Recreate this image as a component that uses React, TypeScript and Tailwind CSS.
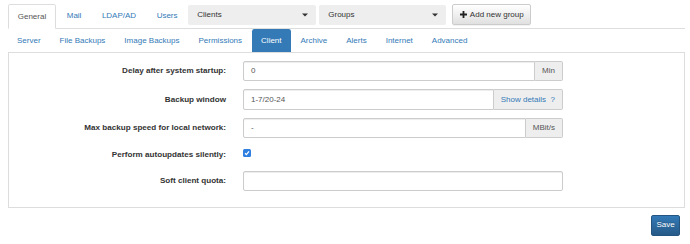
import React from "react";

const topTabs = ["Mail", "LDAP/AD", "Users"];
const subTabs = ["Server", "File Backups", "Image Backups", "Permissions", "Client", "Archive", "Alerts", "Internet", "Advanced"];

function Caret() {
    return (
        <svg width="6" height="4" viewBox="0 0 6 4" className="shrink-0">
            <path d="M0 0.5 L6 0.5 L3 3.5 Z" fill="#333" />
        </svg>
    );
}

function Select({ label, width }: { label: string; width: string }) {
    return (
        <div className={`${width} h-[20px] bg-[#eee] rounded-[2px] flex items-center justify-between pl-[9px] pr-[8px] text-[#333]`}>
            <span>{label}</span>
            <Caret />
        </div>
    );
}

function Row({ label, children, tall = true }: { label: string; children: React.ReactNode; tall?: boolean }) {
    return (
        <div className={`flex items-center ${tall ? "h-[20.4px]" : "h-[16.2px]"} mb-[8.1px]`}>
            <div className="w-[217px] text-right font-bold text-[8.1px] text-[#333]">{label}</div>
            <div className="ml-[17px] w-[320px] flex">{children}</div>
        </div>
    );
}

function Input({ value, addon }: { value?: string; addon?: React.ReactNode }) {
    return (
        <div className="flex w-full h-[20.4px]">
            <div
                className={`flex-1 flex items-center px-[7px] border border-[#ccc] bg-white text-[#555] shadow-[inset_0_1px_1px_rgba(0,0,0,0.075)] ${addon ? "rounded-l-[2px]" : "rounded-[2px]"}`}
            >
                {value}
            </div>
            {addon && (
                <div className="flex items-center px-[7px] border border-l-0 border-[#ccc] bg-[#eee] rounded-r-[2px] text-[#555]">
                    {addon}
                </div>
            )}
        </div>
    );
}

export default function App() {
    return (
        <div className="w-[690px] h-[244px] bg-white pl-[8px] pt-[4px] font-['Liberation_Sans',Arial,sans-serif] text-[8px] leading-[12px] text-[#333]">
            <div className="w-[677px]">
                {/* top tabs */}
                <div className="flex h-[25px] border-b border-[#ddd]">
                    <div className="-mb-px h-[25px] border border-[#ddd] border-b-white bg-white rounded-t-[2.4px] px-[8.75px] flex items-center text-[#555] mr-[1px]">
                        General
                    </div>
                    {topTabs.map((t) => (
                        <div key={t} className="h-[24px] border border-transparent px-[8.75px] flex items-center text-[#337ab7] mr-[1px]">
                            {t}
                        </div>
                    ))}
                    <div className="flex items-start pt-[0.5px] gap-[3px]">
                        <Select label="Clients" width="w-[128px]" />
                        <Select label="Groups" width="w-[127px]" />
                        <div className="ml-[3px] -mt-[0.5px] h-[21px] w-[79px] flex items-center justify-center gap-[3px] border border-[#ccc] rounded-[2px] bg-gradient-to-b from-white to-[#e0e0e0] text-[#333] shadow-[0_1px_0_rgba(0,0,0,0.05)]">
                            <svg width="7" height="7" viewBox="0 0 7 7">
                                <path d="M2.6 0 H4.4 V2.6 H7 V4.4 H4.4 V7 H2.6 V4.4 H0 V2.6 H2.6 Z" fill="#222" />
                            </svg>
                            <span>Add new group</span>
                        </div>
                    </div>
                </div>

                {/* sub tabs */}
                <div className="flex h-[23px]">
                    {subTabs.map((t, i) => (
                        <div
                            key={t}
                            className={`h-[23px] px-[9px] flex items-center ${i > 0 ? "ml-[1px]" : ""} ${
                                t === "Client" ? "bg-[#337ab7] text-white rounded-t-[2.4px]" : "text-[#337ab7]"
                            }`}
                        >
                            {t}
                        </div>
                    ))}
                </div>

                {/* panel */}
                <div className="border border-[#ddd] bg-white pt-[8px] pb-[8px]">
                    <Row label="Delay after system startup:">
                        <Input value="0" addon="Min" />
                    </Row>
                    <Row label="Backup window">
                        <Input value="1-7/20-24" addon={<span className="text-[#337ab7]">Show details&nbsp;&nbsp;?</span>} />
                    </Row>
                    <Row label="Max backup speed for local network:">
                        <Input value="-" addon="MBit/s" />
                    </Row>
                    <Row label="Perform autoupdates silently:" tall={false}>
                        <div className="-mt-[3px] w-[8px] h-[8px] rounded-[1.5px] bg-[#2f7fe0] flex items-center justify-center">
                            <svg width="6" height="6" viewBox="0 0 6 6">
                                <path d="M1 3.2 L2.4 4.6 L5 1.4" stroke="white" strokeWidth="1.3" fill="none" />
                            </svg>
                        </div>
                    </Row>
                    <Row label="Soft client quota:">
                        <Input />
                    </Row>
                </div>

                {/* save */}
                <div className="flex justify-end pr-[5px] mt-[6.5px]">
                    <div className="h-[21px] w-[29px] flex items-center justify-center border border-[#245580] rounded-[2px] bg-gradient-to-b from-[#337ab7] to-[#265a88] text-white [text-shadow:0_-1px_0_rgba(0,0,0,0.2)]">
                        Save
                    </div>
                </div>
            </div>
        </div>
    );
}
